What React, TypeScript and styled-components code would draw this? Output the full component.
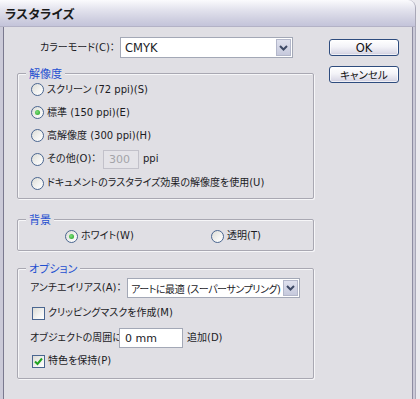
import React from "react";
import styled, { createGlobalStyle } from "styled-components";

const Global = createGlobalStyle`
  html, body { margin: 0; padding: 0; background: #ebeaef; }
  body { font-family: "DejaVu Sans", "Noto Sans CJK JP", sans-serif; font-size: 10px; color: #1b1b1f; }
  * { box-sizing: border-box; }
`;

const Frame = styled.div`
  width: 420px;
  height: 399px;
  overflow: hidden;
  background: #ebeaef;
`;

const Window = styled.div`
  width: 416px;
  height: 399px;
  display: flex;
  flex-direction: column;
  background: #cbcad8;
  border-top-right-radius: 8px;
  overflow: hidden;
  border-right: 1px solid #a9a8b8;
`;

const TitleBar = styled.div`
  height: 27px;
  flex: none;
  display: flex;
  align-items: center;
  padding-left: 5px;
  background: linear-gradient(#fbfbfd 0%, #e4e4ee 35%, #cfcfe0 75%, #c4c4da 100%);
  border-bottom: 1px solid #b3b2c6;
`;

const Title = styled.span`
  font-family: "Noto Sans CJK JP", sans-serif;
  font-weight: 700;
  font-size: 12.5px;
  color: #1a1a1a;
  font-feature-settings: "palt";
  letter-spacing: 0.2px;
`;

const Body = styled.div`
  flex: 1;
  margin: 0 2px 0 3px;
  background: #e0dfe4;
  border-left: 1px solid #7a798f;
  border-right: 1px solid #8e8da2;
  display: flex;
  padding-left: 13px;
`;

const Main = styled.div`
  width: 297px;
  padding-top: 10px;
  display: flex;
  flex-direction: column;
`;

const Side = styled.div`
  margin-left: 15px;
  padding-top: 12px;
  display: flex;
  flex-direction: column;
  gap: 10px;
`;

const Button = styled.div<{ $big?: boolean }>`
  width: 70px;
  height: 17px;
  border: 1px solid #2e4c7e;
  border-radius: 3px;
  background: linear-gradient(#ffffff 0%, #f3f3f8 45%, #dcdbe8 85%, #c9c8da 100%);
  display: flex;
  align-items: center;
  justify-content: center;
  font-size: ${(p) => (p.$big ? 11.5 : 10.5)}px;
  font-feature-settings: "palt";
  color: #111;
  box-shadow: inset 0 0 0 1px rgba(255, 255, 255, 0.7);
`;

const Jp = styled.span`
  font-feature-settings: "palt";
  white-space: nowrap;
  line-height: 14px;
`;

const ModeRow = styled.div`
  display: flex;
  align-items: center;
  height: 21px;
  padding-left: 23px;
`;

const FieldLabel = styled(Jp)<{ $w: number }>`
  width: ${(p) => p.$w}px;
  flex: none;
`;

const Select = styled.div<{ $w: number; $h?: number }>`
  width: ${(p) => p.$w}px;
  height: ${(p) => (p.$h ? p.$h : 21)}px;
  flex: none;
  display: flex;
  align-items: stretch;
  border: 1px solid #a3a8b6;
  background: #fff;
`;

const SelectText = styled(Jp)<{ $big?: boolean; $tight?: boolean }>`
  flex: 1;
  overflow: hidden;
  padding-left: ${(p) => (p.$tight ? 3 : 4)}px;
  display: flex;
  align-items: center;
  line-height: normal;
  font-size: ${(p) => (p.$big ? 11.5 : 10)}px;
  letter-spacing: ${(p) => (p.$tight ? -0.45 : 0)}px;
`;

const Arrow = styled.div`
  width: 15px;
  flex: none;
  margin: 1px;
  border: 1px solid #b3b7ca;
  background: linear-gradient(#dfe1ee, #c6c9dc);
  display: flex;
  align-items: center;
  justify-content: center;
`;

const Group = styled.div<{ $mt: number; $h: number; $pt: number }>`
  position: relative;
  margin-top: ${(p) => p.$mt}px;
  height: ${(p) => p.$h}px;
  border: 1px solid #a9a8b2;
  border-radius: 2px;
  box-shadow: 1px 1px 0 #f6f6f8, inset 1px 1px 0 #f6f6f8;
  padding-top: ${(p) => p.$pt}px;
  display: flex;
  flex-direction: column;
`;

const Legend = styled.span`
  position: absolute;
  top: -8px;
  left: 8px;
  padding: 0 3px;
  background: #e0dfe4;
  color: #1f4fd0;
  font-family: "Noto Sans CJK JP", sans-serif;
  font-feature-settings: "palt";
  font-size: 11px;
  line-height: 15px;
`;

const Row = styled.div<{ $h: number; $pl: number }>`
  height: ${(p) => p.$h}px;
  padding-left: ${(p) => p.$pl}px;
  display: flex;
  align-items: center;
  flex: none;
`;

const Choice = styled.div<{ $w?: number }>`
  display: flex;
  align-items: center;
  gap: 3px;
  flex: none;
  ${(p) => (p.$w ? `width: ${p.$w}px;` : "")}
`;

const RadioDot = styled.span<{ $on?: boolean }>`
  width: 13px;
  height: 13px;
  border-radius: 50%;
  border: 1px solid #4a6690;
  background: linear-gradient(135deg, #dcdcd6 0%, #f4f4f2 60%, #ffffff 100%);
  display: flex;
  align-items: center;
  justify-content: center;
  flex: none;
  &::after {
    content: "";
    width: 5px;
    height: 5px;
    border-radius: 50%;
    background: radial-gradient(circle at 40% 40%, #7ee07e, #1f9d1f);
    display: ${(p) => (p.$on ? "block" : "none")};
  }
`;

const Box = styled.span`
  width: 13px;
  height: 13px;
  border: 1px solid #4a6690;
  background: linear-gradient(135deg, #dcdcd6 0%, #f4f4f2 60%, #ffffff 100%);
  display: flex;
  align-items: center;
  justify-content: center;
  flex: none;
`;

const TextField = styled.div<{ $w: number; $disabled?: boolean }>`
  width: ${(p) => p.$w}px;
  height: ${(p) => (p.$disabled ? 19 : 20)}px;
  border: 1px solid ${(p) => (p.$disabled ? "#c2c1ca" : "#a3a8b6")};
  background: ${(p) => (p.$disabled ? "#e4e3e8" : "#ffffff")};
  color: ${(p) => (p.$disabled ? "#a3a3a8" : "#1b1b1f")};
  display: flex;
  align-items: center;
  padding-left: 5px;
  margin-right: 4px;
  flex: none;
  font-size: 11px;
`;

const Chevron = () => (
  <svg width="9" height="6" viewBox="0 0 9 6">
    <path d="M1 1 L4.5 4.5 L8 1" stroke="#3e4a66" strokeWidth="2" fill="none" />
  </svg>
);

const Check = () => (
  <svg width="9" height="9" viewBox="0 0 9 9">
    <path d="M1 4.5 L3.5 7 L8 1.5" stroke="#22a322" strokeWidth="2" fill="none" />
  </svg>
);

const Radio = ({ on, label, w }: { on?: boolean; label: string; w?: number }) => (
  <Choice $w={w}>
    <RadioDot $on={on} />
    <Jp>{label}</Jp>
  </Choice>
);

export default function App() {
  return (
    <Frame>
      <Global />
      <Window>
        <TitleBar>
          <Title>ラスタライズ</Title>
        </TitleBar>
        <Body>
          <Main>
            <ModeRow>
              <FieldLabel $w={80}>カラーモード(C)：</FieldLabel>
              <Select $w={173}>
                <SelectText $big>CMYK</SelectText>
                <Arrow>
                  <Chevron />
                </Arrow>
              </Select>
            </ModeRow>

            <Group $mt={15} $h={126} $pt={4}>
              <Legend>解像度</Legend>
              <Row $h={23} $pl={13}>
                <Radio label="スクリーン (72 ppi)(S)" />
              </Row>
              <Row $h={23} $pl={13}>
                <Radio on label="標準 (150 ppi)(E)" />
              </Row>
              <Row $h={23} $pl={13}>
                <Radio label="高解像度 (300 ppi)(H)" />
              </Row>
              <Row $h={24} $pl={13}>
                <Radio label="その他(O)：" w={72} />
                <TextField $w={36} $disabled>
                  300
                </TextField>
                <Jp>ppi</Jp>
              </Row>
              <Row $h={24} $pl={13}>
                <Radio label="ドキュメントのラスタライズ効果の解像度を使用(U)" />
              </Row>
            </Group>

            <Group $mt={20} $h={32} $pt={3}>
              <Legend>背景</Legend>
              <Row $h={26} $pl={47}>
                <Radio on label="ホワイト(W)" w={146} />
                <Radio label="透明(T)" />
              </Row>
            </Group>

            <Group $mt={17} $h={111} $pt={9}>
              <Legend>オプション</Legend>
              <Row $h={20} $pl={12}>
                <FieldLabel $w={97}>アンチエイリアス(A)：</FieldLabel>
                <Select $w={173} $h={20}>
                  <SelectText $tight>アートに最適 (スーパーサンプリング)</SelectText>
                  <Arrow>
                    <Chevron />
                  </Arrow>
                </Select>
              </Row>
              <Row $h={30} $pl={14}>
                <Choice>
                  <Box />
                  <Jp>クリッピングマスクを作成(M)</Jp>
                </Choice>
              </Row>
              <Row $h={20} $pl={12}>
                <FieldLabel $w={89}>オブジェクトの周囲に</FieldLabel>
                <TextField $w={64}>0 mm</TextField>
                <Jp>追加(D)</Jp>
              </Row>
              <Row $h={26} $pl={14}>
                <Choice>
                  <Box>
                    <Check />
                  </Box>
                  <Jp>特色を保持(P)</Jp>
                </Choice>
              </Row>
            </Group>
          </Main>
          <Side>
            <Button $big>OK</Button>
            <Button>キャンセル</Button>
          </Side>
        </Body>
      </Window>
    </Frame>
  );
}
